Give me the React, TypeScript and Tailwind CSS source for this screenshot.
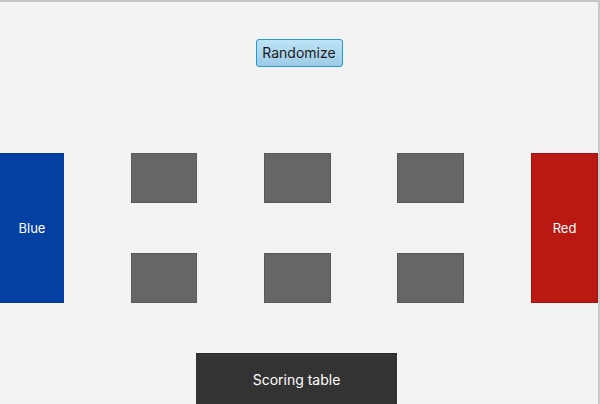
export default function App() {
  const tables = [0, 1, 2];

  return (
    <div
      className="w-[600px] h-[404px] overflow-hidden bg-[#f3f3f3] border-t-2 border-t-[#c6c6c6] border-r-2 border-r-[#c9c9c9]"
      style={{ fontFamily: "Inter, 'Noto Sans', sans-serif" }}
    >
      <div className="flex flex-col">
        {/* top bar */}
        <div className="shrink-0 h-[151px] flex justify-center pt-[37px]">
          <button className="h-[28px] w-[87px] rounded-[3px] border border-[#1f9bd6] bg-gradient-to-b from-[#bde3f5] to-[#9dcbe7] text-[14px] text-[#1c1c1c] leading-none">
            Randomize
          </button>
        </div>

        {/* arena */}
        <div className="shrink-0 flex justify-between h-[150px]">
          <div className="w-[64px] h-full bg-[#0340a1] border-y border-[#02358a] flex items-center justify-center pt-[2px] text-white text-[13px]">
            Blue
          </div>
          {tables.map((t) => (
            <div
              key={t}
              className={`${t === 0 ? "w-[66px]" : "w-[67px]"} h-full flex flex-col justify-between`}
            >
              <div className="h-[50px] bg-[#666666] border border-[#585858]" />
              <div className="h-[50px] bg-[#666666] border border-[#585858]" />
            </div>
          ))}
          <div className="w-[67px] h-full bg-[#b91911] border border-[#a5120c] flex items-center justify-center pt-[2px] text-white text-[13px]">
            Red
          </div>
        </div>

        {/* scoring table */}
        <div className="shrink-0 pt-[50px] pl-[196px]">
          <div className="w-[201px] h-[60px] bg-[#333333] border-t border-[#2a2a2a] flex justify-center pt-[15px] text-white text-[14px]">
            Scoring table
          </div>
        </div>
      </div>
    </div>
  );
}
